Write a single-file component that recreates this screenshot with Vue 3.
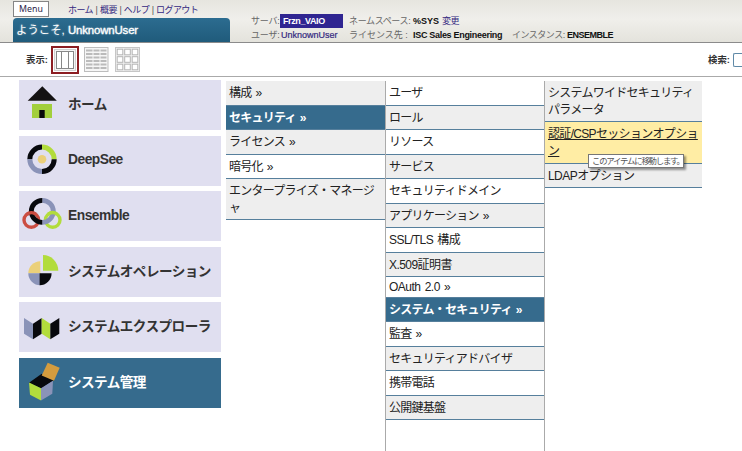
<script setup>
const navItems = [
  { id: 'home', label: 'ホーム' },
  { id: 'deepsee', label: 'DeepSee', latin: true },
  { id: 'ensemble', label: 'Ensemble', latin: true },
  { id: 'operation', label: 'システムオペレーション' },
  { id: 'explorer', label: 'システムエクスプローラ' },
  { id: 'admin', label: 'システム管理', active: true }
]

const areas = [
  { label: '構成 »' },
  { label: 'セキュリティ »', active: true },
  { label: 'ライセンス »' },
  { label: '暗号化 »' },
  { label: 'エンタープライズ・マネージャ', tall: true }
]

const securityItems = [
  { label: 'ユーザ' },
  { label: 'ロール' },
  { label: 'リソース' },
  { label: 'サービス' },
  { label: 'セキュリティドメイン' },
  { label: 'アプリケーション »' },
  { label: 'SSL/TLS 構成', mixed: true },
  { label: 'X.509証明書', mixed: true },
  { label: 'OAuth 2.0 »', latin: true },
  { label: 'システム・セキュリティ »', active: true },
  { label: '監査 »' },
  { label: 'セキュリティアドバイザ' },
  { label: '携帯電話' },
  { label: '公開鍵基盤' }
]
</script>

<template>
  <div class="page">
    <header class="header">
      <div class="brand">
        <div class="links-row">
          <button class="menu-btn">Menu</button>
          <nav class="links">
            <a>ホーム</a><i>|</i><a>概要</a><i>|</i><a>ヘルプ</a><i>|</i><a>ログアウト</a>
          </nav>
        </div>
        <div class="welcome">ようこそ, <span class="who">UnknownUser</span></div>
      </div>
      <div class="info">
        <div class="info-row">
          <span class="c1">サーバ:</span><span class="c2"><b class="server">Frzn_VAIO</b></span>
          <span class="c3 ns">ネームスペース:</span><b class="c4 sys">%SYS</b><a class="change">変更</a>
        </div>
        <div class="info-row">
          <span class="c1">ユーザ:</span><span class="c2 user">UnknownUser</span>
          <span class="c3">ライセンス先 :</span><b class="c4 lic">ISC Sales Engineering</b>
          <span class="inst">インスタンス:</span><b class="ens">ENSEMBLE</b>
        </div>
      </div>
    </header>

    <div class="toolbar">
      <span class="view-label">表示:</span>
      <svg class="view selected" viewBox="0 0 28 28">
        <rect x="1" y="1" width="26" height="26" fill="#fff" stroke="#8c1d22" stroke-width="2" />
        <rect x="3.5" y="3.5" width="21" height="21" fill="#f4f4f4" stroke="#d0d0d0" />
        <rect x="5.5" y="5.5" width="17" height="17" fill="#fff" stroke="#888" />
        <path d="M10.5 5v18M17.5 5v18" stroke="#888" />
      </svg>
      <svg class="view second" viewBox="0 0 25 25">
        <rect x=".5" y=".5" width="23.5" height="24" fill="#f6f6f6" stroke="#bdbdbd" />
        <path v-for="n in 6" :key="n" :d="`M2 ${n * 3.5}h6.5M9.5 ${n * 3.5}h6M16.5 ${n * 3.5}h6`" stroke="#bbb" stroke-width="1.8" />
      </svg>
      <svg class="view third" viewBox="0 0 25 25">
        <rect x=".5" y=".5" width="24" height="24" fill="#f2f2f2" stroke="#c6c6c6" />
        <template v-for="r in 3" :key="r">
          <rect v-for="c in 3" :key="c" :x="c * 7.5 - 5.3" :y="r * 7.5 - 5.3" width="5.6" height="5.6" fill="#fff" stroke="#b4b4b4" />
        </template>
      </svg>
      <div class="search">
        <label>検索:</label>
        <div class="search-input"></div>
      </div>
    </div>

    <main class="content">
      <nav class="side">
        <div v-for="item in navItems" :key="item.id" class="side-item" :class="{ active: item.active, latin: item.latin }">
          <svg class="side-icon" viewBox="0 0 49 50">
            <g v-if="item.id === 'home'">
              <path d="M8.7 20.8 23.3 6.3l14.5 14.5z" fill="#141213" />
              <path d="M13 24h20v14H13z" fill="#a2cf3c" />
              <path d="M20.3 30h5.4v8h-5.4z" fill="#08090a" />
            </g>
            <g v-else-if="item.id === 'deepsee'" fill="none" stroke-width="5">
              <path d="M10.8 23.3A12.2 12.2 0 0 1 23 11.1" stroke="#08090d" />
              <path d="M23 11.1a12.2 12.2 0 0 1 12.2 12.2" stroke="#b2dc3c" />
              <path d="M35.2 23.3A12.2 12.2 0 0 1 23 35.5" stroke="#08090d" />
              <path d="M23 35.5a12.2 12.2 0 0 1-12.2-12.2" stroke="#8a93b8" />
              <circle cx="23" cy="23.3" r="4.3" fill="#ebd07a" stroke="none" />
            </g>
            <g v-else-if="item.id === 'ensemble'" fill="none">
              <circle cx="12.3" cy="29" r="7.3" stroke="#cb4d42" stroke-width="3.4" />
              <circle cx="33.7" cy="29" r="7.3" stroke="#b2dc3c" stroke-width="3.4" />
              <path d="M23.3 31.3a11 11 0 0 0 0-22" stroke="#8a93b8" stroke-width="4.8" />
              <path d="M23.3 9.3a11 11 0 0 0 0 22" stroke="#08090d" stroke-width="4.8" />
              <path d="M7.5 23.5a7.3 7.3 0 0 1 9.2-.4" stroke="#cb4d42" stroke-width="3.4" />
              <path d="M29.2 23.2a7.3 7.3 0 0 1 8.6-.3" stroke="#b2dc3c" stroke-width="3.4" />
            </g>
            <g v-else-if="item.id === 'operation'">
              <path d="M21.3 26.3h-12a12 12 0 0 1 12-12z" fill="#ebd07a" />
              <path d="M21.3 26.3v12a12 12 0 0 1-12-12z" fill="#8a93b8" />
              <path d="M20.6 26.3h12a12 12 0 0 1-12 12z" fill="#08090d" />
              <path d="M24 23.8V8a15.3 15.8 0 0 1 15.3 15.8z" fill="#b2dc3c" />
            </g>
            <g v-else-if="item.id === 'explorer'">
              <path d="m5 16 9 5.7v15.6l-9-5.6z" fill="#8a93b8" />
              <path d="m14 21.7 8.7-5.7v15.7L14 37.3z" fill="#08090d" />
              <path d="m22.7 16 8.6 5.7v15.6l-8.6-5.6z" fill="#b2dc3c" />
              <path d="m31.3 21.7 9-5.7v15.7l-9 5.6z" fill="#08090d" />
            </g>
            <g v-else>
              <path d="M22.7 15.8 34.7 22.2 22.3 30.5 10 24.8z" fill="#08090d" />
              <path d="M28.7 4.8 40.7 9.8 35 22.8 22.7 17.5z" fill="#d49c3e" />
              <path d="M10 24.6 22 30.3V42.5L11 36.8z" fill="#b2dc3c" />
              <path d="M22 30.3 34 22.8 33.3 35.8 22 42.5z" fill="#8a93b8" />
            </g>
          </svg>
          <span class="side-label">{{ item.label }}</span>
        </div>
      </nav>

      <div class="columns">
        <ul class="col first">
          <li v-for="row in areas" :key="row.label" :class="{ active: row.active, tall: row.tall }">{{ row.label }}</li>
        </ul>
        <ul class="col second-col">
          <li v-for="row in securityItems" :key="row.label" :class="{ active: row.active, latin: row.latin, mixed: row.mixed }">{{ row.label }}</li>
        </ul>
        <ul class="col last">
          <li class="tall">システムワイドセキュリティパラメータ</li>
          <li class="tall hover">認証/CSPセッションオプション<div class="tooltip">このアイテムに移動します。</div></li>
          <li class="mixed">LDAPオプション</li>
        </ul>
      </div>
    </main>
  </div>
</template>

<style>
body { margin: 0; overflow: hidden; background: #fff; }
</style>

<style scoped>
.page {
  width: 742px;
  height: 451px;
  overflow: hidden;
  display: flex;
  flex-direction: column;
  font-family: "Liberation Sans", "Noto Sans CJK JP", sans-serif;
  color: #222;
}
.header {
  box-sizing: border-box;
  height: 43px;
  flex: none;
  display: flex;
  padding-left: 13px;
  background: linear-gradient(#e6e5df, #f0efeb 45%, #e4e3dc);
  border-bottom: 1px solid #8b8b8b;
}
.brand { width: 238px; flex: none; }
.links-row { display: flex; height: 18px; align-items: flex-start; }
.menu-btn {
  box-sizing: border-box;
  width: 36px;
  height: 16px;
  margin: 1px 19px 0 0;
  padding: 0;
  border: 1px solid #858585;
  background: #fff;
  color: #2a1d4a;
  font: 8.8px/13px "Noto Sans", sans-serif;
}
.links {
  display: flex;
  padding-top: 3px;
  font-size: 9px;
  letter-spacing: -.58px;
  line-height: 14px;
  color: #33287f;
  white-space: nowrap;
}
.links i { font-style: normal; width: 7px; text-align: center; color: #555; }
.welcome {
  box-sizing: border-box;
  width: 217px;
  height: 24px;
  padding: 2px 0 0 3px;
  border-radius: 4px 4px 0 0;
  background: linear-gradient(#2c6c90, #205b7b);
  color: #fff;
  font-size: 11.4px;
  line-height: 20px;
  white-space: pre;
  text-shadow: 0 0 2px rgba(255, 255, 255, .5);
}
.who { letter-spacing: -.13px; -webkit-text-stroke: .3px #fff; }
.info { padding-top: 14px; font-size: 9px; color: #666; }
.info-row { display: flex; height: 14px; line-height: 14px; white-space: nowrap; }
.c1 { width: 29px; letter-spacing: -.2px; }
.c2 { width: 69px; }
.c3 { width: 64px; }
.c4 { color: #111; }
.info b { font-size: 9px; letter-spacing: -.3px; }
.info b.server {
  display: block;
  box-sizing: border-box;
  width: 63px;
  height: 14px;
  padding-left: 3px;
  background: #2f2591;
  color: #fff;
  line-height: 14px;
  letter-spacing: -.4px;
}
.ns { letter-spacing: -.35px; }
.info b.sys { width: 29px; letter-spacing: 0; }
.change { color: #33287f; letter-spacing: -.5px; }
.user { padding-left: 1px; width: 68px; color: #33287f; -webkit-text-stroke: .2px #33287f; }
.lic { width: 99px; }
.inst { width: 55px; letter-spacing: -.5px; }
.info b.ens { color: #111; letter-spacing: -.5px; }
.toolbar {
  box-sizing: border-box;
  height: 34px;
  flex: none;
  display: flex;
  align-items: center;
  padding: 0 0 0 26px;
  border-bottom: 1px solid #aaa;
  font-size: 9.4px;
  font-weight: bold;
  color: #333;
}
.view-label, .search label { width: 25px; margin-top: -2px; white-space: nowrap; }
.view { width: 25px; height: 25px; }
.view.selected { width: 28px; height: 28px; }
.second { margin-left: 5px; }
.third { margin-left: 6px; }
.search { display: flex; align-items: center; margin-left: auto; }
.search-input {
  box-sizing: border-box;
  width: 9px;
  height: 14px;
  border: 1px solid #5f89a7;
  border-right: 0;
  border-radius: 2px 0 0 2px;
}
.content { display: flex; flex: 1; min-height: 0; padding-left: 19px; }
.side { width: 202px; flex: none; display: flex; flex-direction: column; gap: 5.5px; padding-top: 3px; }
.side-item {
  height: 50px;
  flex: none;
  display: flex;
  align-items: center;
  background: #e0dff0;
  color: #333;
  font-size: 13.6px;
  letter-spacing: -.54px;
  font-weight: bold;
  white-space: nowrap;
}
.side-item.active { background: #366b8d; color: #fff; }
.side-item.latin { font-size: 13.8px; letter-spacing: -.5px; }
.side-icon { width: 49px; height: 50px; flex: none; }
.side-label { margin-bottom: 4px; }
.latin .side-label { margin-bottom: 2px; }
.columns { display: flex; margin: 4px 0 0 5px; }
.col {
  box-sizing: border-box;
  margin: 0;
  padding: 0;
  list-style: none;
  width: 159px;
  border-right: 1px solid #aaa;
}
.first { width: 160px; }
.last { width: 157px; border-right: 0; }
.col li {
  box-sizing: border-box;
  height: 24.5px;
  padding: 4px 0 0 3px;
  border-bottom: 1px solid #567f9c;
  font-size: 12px;
  letter-spacing: -.74px;
  word-spacing: 1.3px;
  line-height: 17px;
  color: #222;
  word-break: break-all;
  line-break: anywhere;
}
.first li:nth-child(odd), .last li:nth-child(odd), .second-col li:nth-child(even) { background: #eee; }
.col li.tall { height: 41.3px; padding-right: 3px; }
.col li.mixed { letter-spacing: -.55px; }
.col li.latin { height: 20.5px; padding-top: 2px; letter-spacing: -.5px; }
.first li.active, .second-col li.active { background: #366b8d; color: #fff; font-weight: bold; }
.last li.hover { position: relative; background: #ffeda4; text-decoration: underline; letter-spacing: -.68px; }
.tooltip {
  position: absolute;
  left: 43px;
  top: 32px;
  z-index: 2;
  box-sizing: border-box;
  display: inline-block;
  width: 96px;
  height: 14px;
  padding-left: 3px;
  border: 1px solid #777;
  background: #fff;
  box-shadow: 2px 2px 2px rgba(0, 0, 0, .4);
  color: #555;
  font-size: 8.4px;
  line-height: 12px;
  letter-spacing: -1.2px;
  white-space: nowrap;
}
</style>
